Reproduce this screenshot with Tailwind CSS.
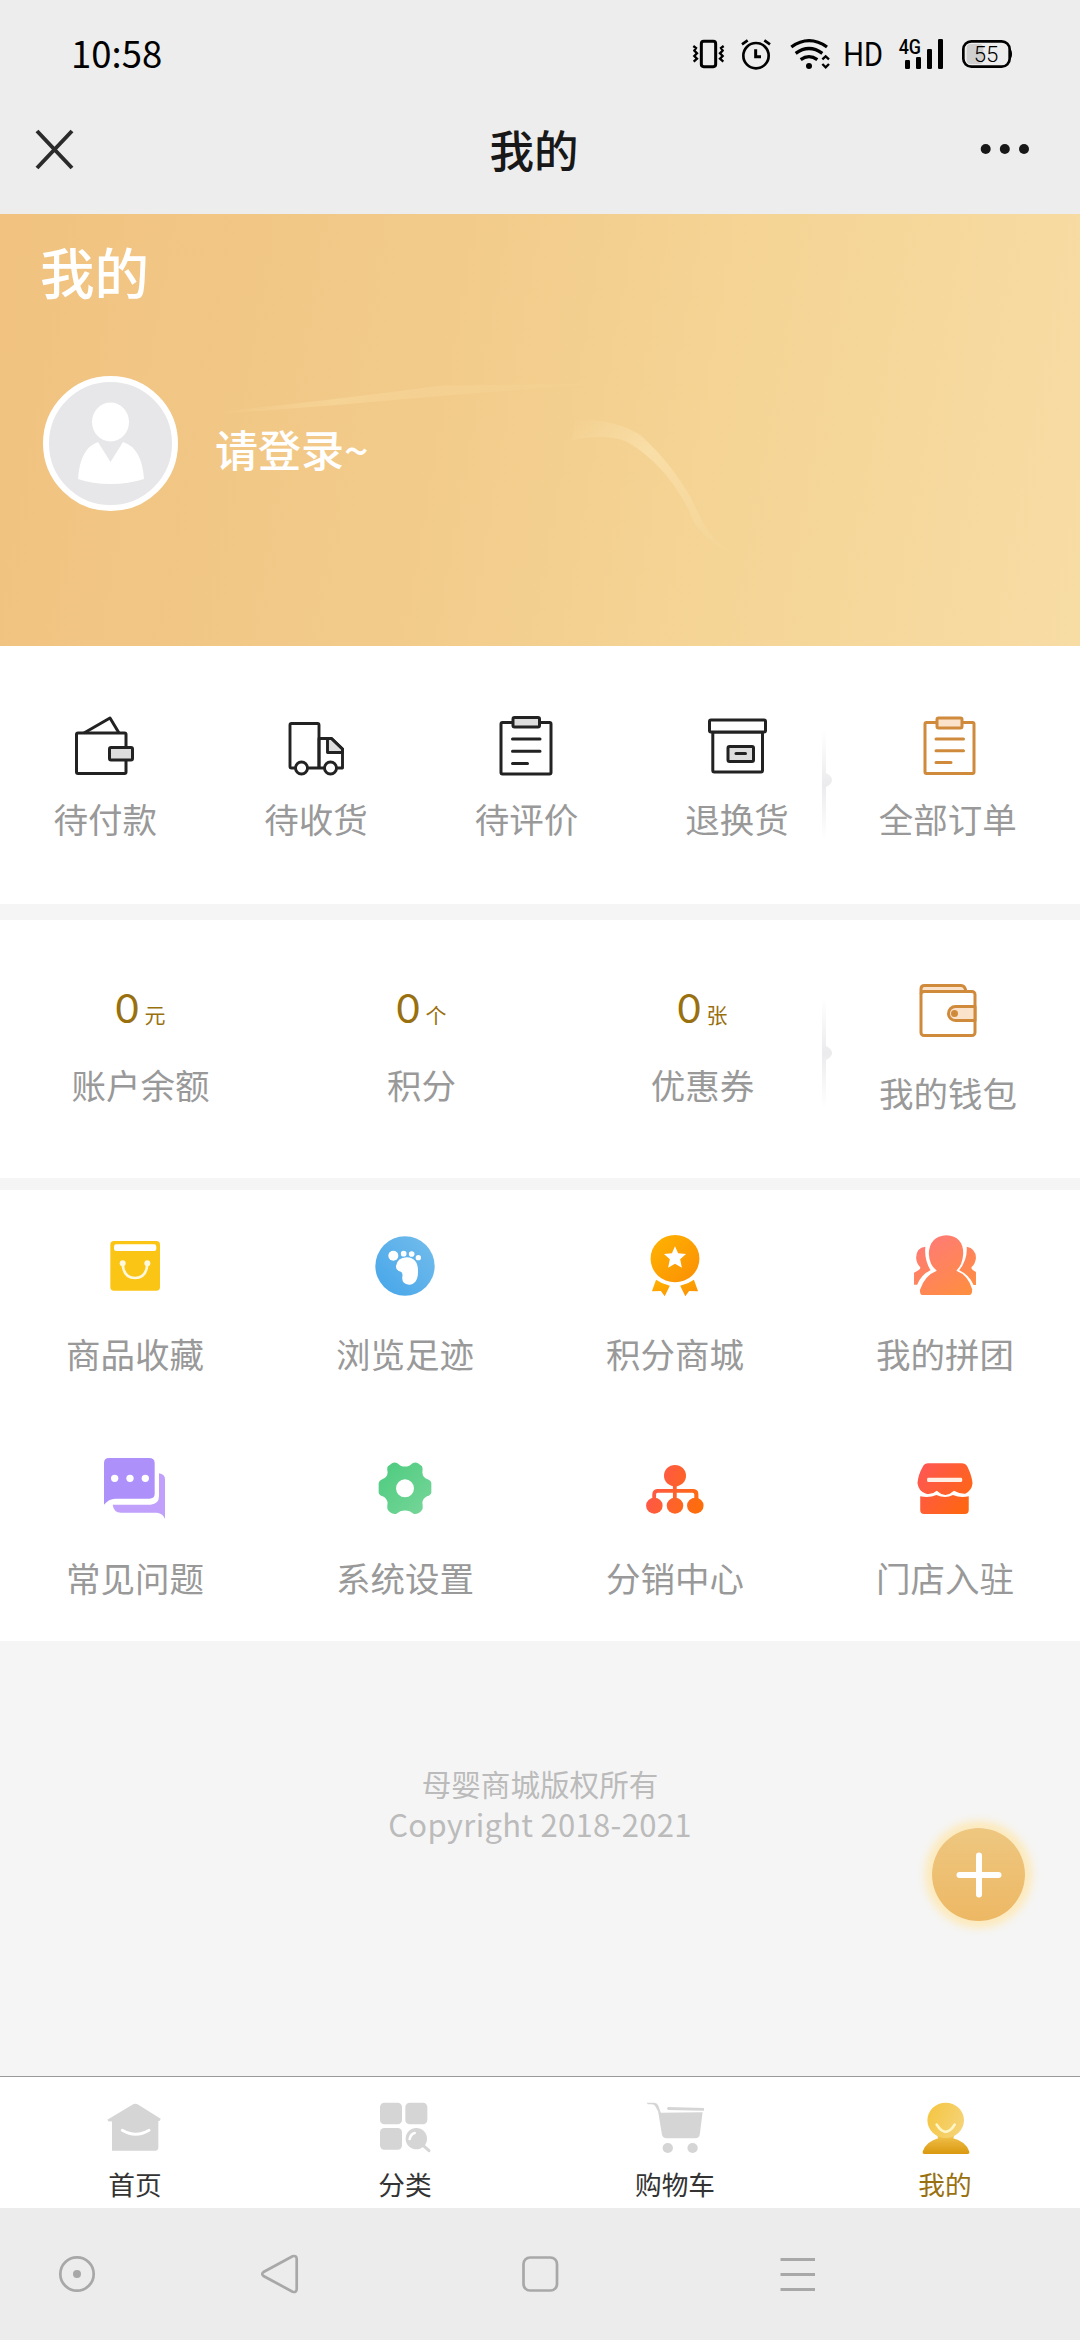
<!DOCTYPE html>
<html lang="zh-CN">
<head>
<meta charset="utf-8">
<title>我的</title>
<script src="https://cdn.jsdelivr.net/npm/@tailwindcss/browser@4"></script>
</head>
<body class="bg-[#f5f5f5]">
<div class="flex h-[2340px] w-[1080px] flex-col overflow-hidden bg-[#f5f5f5] font-['Noto_Sans_CJK_SC',sans-serif] text-[34.5px] leading-[40px] text-[#999]">

  <!-- Status bar -->
  <div class="flex h-[108px] shrink-0 items-center justify-between bg-[#ededed] pr-[65px] pl-[71px] text-black">
    <span class="mb-[3px] text-[36.5px]">10:58</span>
    <div class="flex items-center">
      <svg class="h-10 w-[43px]" viewBox="90 102 129 120" fill="none" stroke="#000" stroke-width="7"><rect x="121" y="124" width="43" height="76" rx="7" stroke-width="9"/><path d="M97 138l8 6-5 8 8 8-8 8 8 8-10 9M188 138l-8 6 5 8-8 8 8 8-8 8 10 9"/></svg>
      <svg class="h-10 w-[47px]" viewBox="219 102 141 120" fill="none" stroke="#000"><circle cx="285" cy="167" r="38" stroke-width="8"/><path d="M284 148v22h16" stroke-width="9"/><path d="M243 133l17-12M327 133l-17-12" stroke-width="8"/></svg>
      <svg class="h-10 w-[57px]" viewBox="360 102 171 120" fill="none" stroke="#000"><path d="M391 141q53-38 107 0M404 160q40-29 80 0M419 179q25-18 50 0" stroke-width="10"/><circle cx="444" cy="198" r="9" fill="#000" stroke="none"/><path d="M484 178l10-9 10 9M484 192l10 10 10-10" stroke-width="7"/></svg>
      <svg class="h-10 w-[53px]" viewBox="531 102 159 120"><text x="547" y="197" textLength="119" lengthAdjust="spacingAndGlyphs" font-family="Roboto, sans-serif" font-size="98">HD</text></svg>
      <svg class="h-10 w-[63px]" viewBox="690 102 189 120"><text x="713" y="161" textLength="67" lengthAdjust="spacingAndGlyphs" font-family="Roboto, sans-serif" font-size="60" font-weight="500">4G</text><rect x="732" y="180" width="15" height="27" rx="4"/><rect x="765" y="171" width="15" height="36" rx="4"/><rect x="798" y="147" width="15" height="60" rx="4"/><rect x="831" y="117" width="15" height="90" rx="4"/></svg>
      <svg class="h-10 w-[61px]" viewBox="879 102 183 120"><rect x="917" y="132" width="50" height="60" rx="12" fill="#cfcfcf"/><rect x="907" y="124" width="139" height="76" rx="24" fill="none" stroke="#000" stroke-width="8"/><path d="M1046 146q7 3 7 16t-7 16z"/><text x="938" y="185" textLength="74" lengthAdjust="spacingAndGlyphs" font-family="Roboto, sans-serif" font-size="66" font-weight="300">55</text></svg>
    </div>
  </div>

  <!-- Title bar -->
  <div class="flex h-[106px] shrink-0 items-center justify-between bg-[#ededed] pr-[50px] pb-6 pl-[34px]">
    <svg class="h-[42px] w-[42px]" viewBox="0 0 42 42" stroke="#2b2b2b" stroke-width="4"><path d="M3 3l35 37M38 3L3 40"/></svg>
    <h1 class="pl-[12px] text-[44.5px] font-medium text-[#181818]">我的</h1>
    <svg class="h-3 w-[50px]" viewBox="0 0 50 12" fill="#181818"><circle cx="5.700" cy="6" r="5"/><circle cx="24.800" cy="6" r="5"/><circle cx="44" cy="6" r="5"/></svg>
  </div>

  <!-- Profile banner -->
  <div class="relative h-[432px] shrink-0 bg-linear-[100deg,#f1c280_0%,#f2cb8a_40%,#f5d596_68%,#f7dca4_100%] px-[40px] pt-[27px] text-white">
    <svg class="absolute inset-0 h-full w-full" viewBox="0 12 1568 1296" preserveAspectRatio="none">
      <defs>
        <linearGradient id="ray" x1="0" x2="1"><stop offset="0" stop-color="#f9dda3" stop-opacity="0"/><stop offset=".3" stop-color="#f9dda3" stop-opacity=".5"/><stop offset="1" stop-color="#f9dda3" stop-opacity="0"/></linearGradient>
        <linearGradient id="tail" x1="0" y1="0" x2="1" y2="1"><stop offset="0" stop-color="#fae2ae" stop-opacity="0"/><stop offset=".35" stop-color="#fae2ae" stop-opacity=".75"/><stop offset="1" stop-color="#fae2ae" stop-opacity="0"/></linearGradient>
      </defs>
      <path d="M310 608Q500 565 640 527L880 520Q680 550 560 572T310 612z" fill="url(#ray)"/>
      <path d="M835 630Q890 625 930 675 985 780 1012 900 1030 990 1070 1040 1010 980 1000 900 965 760 910 695 880 670 830 690z" fill="url(#tail)"/>
    </svg>
    <h2 class="relative text-[54.5px] leading-[60px] font-medium">我的</h2>
    <div class="relative mt-[75px] ml-[3px] flex items-center gap-[37px]">
      <svg class="h-[135px] w-[135px]" viewBox="0 0 135 135"><circle cx="67.500" cy="67.500" r="64.500" fill="#e7e6e8" stroke="#fff" stroke-width="6"/><ellipse cx="67.500" cy="46" rx="18.500" ry="19.500" fill="#fff"/><path d="M55 66L67.500 86 80 66Q99 72 101 103 86 108 67.500 108T35 103Q37 72 55 66z" fill="#fff"/></svg>
      <span class="pt-[8px] text-[43px] font-medium">请登录~</span>
    </div>
  </div>

  <!-- Orders -->
  <section class="relative h-[258px] shrink-0 bg-white pt-[70px]">
    <div class="grid w-[1053px] grid-cols-5">
      <div class="flex flex-col items-center gap-[22px]">
        <svg class="h-[60px] w-[60px]" viewBox="75 716 60 60" fill="none" stroke="#222" stroke-width="3" stroke-linejoin="round"><path d="M84 733l26-15 9 15"/><rect x="76.500" y="733" width="49.500" height="40.500" rx="1.500"/><rect x="109.500" y="747.500" width="23" height="12.500" rx="1.500" fill="#ddd"/></svg>
        <span>待付款</span>
      </div>
      <div class="flex flex-col items-center gap-[22px]">
        <svg class="h-[60px] w-[60px]" viewBox="286 716 60 60" fill="none" stroke="#222" stroke-width="2.900" stroke-linejoin="round"><path d="M327.500 738.500h4l11 10.500v3.500h-15z" fill="#ddd"/><rect x="290" y="723.500" width="29" height="44.500" rx="1.500"/><path d="M319 738.500h12.500l11 10.500v19H319z"/><circle cx="301.500" cy="768" r="6" fill="#fff"/><circle cx="330.500" cy="768" r="6" fill="#fff"/></svg>
        <span>待收货</span>
      </div>
      <div class="flex flex-col items-center gap-[22px]">
        <svg class="h-[60px] w-[60px]" viewBox="496.500 716 60 60" fill="none" stroke="#222" stroke-width="3" stroke-linejoin="round" stroke-linecap="round"><rect x="501.500" y="722.500" width="50" height="51.500" rx="1.500"/><rect x="513.500" y="717.500" width="26.500" height="9.500" rx="1.500" fill="#ddd"/><path d="M513 739h27.500M513 751.300h27.500M513 763.500h15"/></svg>
        <span>待评价</span>
      </div>
      <div class="flex flex-col items-center gap-[22px]">
        <svg class="h-[60px] w-[60px]" viewBox="707 716 60 60" fill="none" stroke="#222" stroke-width="3" stroke-linejoin="round" stroke-linecap="round"><rect x="712.800" y="732" width="49.700" height="40" rx="1.500"/><rect x="709.500" y="720" width="56" height="12" rx="1.500" fill="#fff"/><rect x="728" y="746.500" width="25.500" height="15" rx="1.500" fill="#ddd"/><path d="M736 753.500h9.500"/></svg>
        <span>退换货</span>
      </div>
      <div class="flex flex-col items-center gap-[22px]">
        <svg class="h-[60px] w-[60px]" viewBox="917 716 60 60" fill="none" stroke="#d08a3c" stroke-width="3" stroke-linejoin="round" stroke-linecap="round"><rect x="924" y="722.500" width="49" height="51" rx="1.500"/><rect x="936" y="718" width="25" height="10" rx="1.500" fill="#fbe2ca"/><path d="M935 739h27.500M935 750.700h27.500M935 762.500h15"/></svg>
        <span>全部订单</span>
      </div>
    </div>
    <svg class="absolute top-[84px] left-[818px] h-[110px] w-4" viewBox="0 0 16 110"><defs><linearGradient id="fade" x1="0" y1="0" x2="0" y2="1"><stop offset="0" stop-color="#ededef" stop-opacity="0"/><stop offset=".5" stop-color="#ebebed"/><stop offset="1" stop-color="#ededef" stop-opacity="0"/></linearGradient></defs><path d="M4 0h4v43q6 3 6 7t-6 7v53H4z" fill="url(#fade)"/></svg>
  </section>

  <!-- Wallet -->
  <section class="relative mt-4 flex h-[258px] shrink-0 bg-white">
    <div class="grid w-[843px] grid-cols-3 content-start pt-[68px]">
      <div class="flex flex-col items-center gap-[36px]">
        <p class="flex h-10 items-baseline gap-[6px] text-[#99700f]"><span class="font-[Lato] text-[40px]">0</span><span class="text-[21px]">元</span></p>
        <span>账户余额</span>
      </div>
      <div class="flex flex-col items-center gap-[36px]">
        <p class="flex h-10 items-baseline gap-[6px] text-[#99700f]"><span class="font-[Lato] text-[40px]">0</span><span class="text-[21px]">个</span></p>
        <span>积分</span>
      </div>
      <div class="flex flex-col items-center gap-[36px]">
        <p class="flex h-10 items-baseline gap-[6px] text-[#99700f]"><span class="font-[Lato] text-[40px]">0</span><span class="text-[21px]">张</span></p>
        <span>优惠券</span>
      </div>
    </div>
    <div class="flex w-[210px] flex-col items-center gap-8 pt-[60px]">
      <svg class="h-[60px] w-[60px]" viewBox="918 980 60 60" fill="none" stroke="#d08a3c" stroke-width="3" stroke-linejoin="round"><path d="M921 994v-5q0-3.500 3.500-3.500H961q4 0 5 6H923" fill="#fbe2ca"/><rect x="921" y="991.500" width="54" height="44" rx="3" fill="#fff"/><path d="M975 1006.500h-19.500a7 7 0 0 0 0 14H975z" fill="#fbe2ca"/><circle cx="954.500" cy="1013.500" r="2" fill="#b97b3a"/></svg>
      <span>我的钱包</span>
    </div>
    <svg class="absolute top-[78px] left-[818px] h-[110px] w-4" viewBox="0 0 16 110"><path d="M4 0h4v48q6 3 6 7t-6 7v48H4z" fill="url(#fade)"/></svg>
  </section>

  <!-- Services -->
  <section class="mt-3 grid h-[451px] shrink-0 grid-cols-4 content-start gap-y-[85px] bg-white pt-11">
    <div class="flex flex-col items-center gap-[35px]">
      <svg class="h-16 w-16" viewBox="219 72 192 192"><rect x="241" y="93" width="149" height="149" rx="11" fill="#fac515"/><rect x="252" y="103" width="127" height="20" rx="7" fill="#fff"/><path d="M278 162q3 42 37 42t37-42" fill="none" stroke="#fff8dc" stroke-width="8"/><circle cx="278" cy="160" r="9" fill="#fff8dc"/><circle cx="352" cy="160" r="9" fill="#fff8dc"/></svg>
      <span>商品收藏</span>
    </div>
    <div class="flex flex-col items-center gap-[35px]">
      <svg class="h-16 w-16" viewBox="1029 72 192 192"><defs><linearGradient id="blue" x1="1" y1="0" x2="0" y2="1"><stop offset="0" stop-color="#74bdec"/><stop offset="1" stop-color="#45a5e9"/></linearGradient></defs><circle cx="1125" cy="168" r="89" fill="url(#blue)"/><g fill="#fff"><circle cx="1090" cy="137" r="15"/><circle cx="1121" cy="131" r="8.500"/><circle cx="1145" cy="132" r="8.500"/><circle cx="1165" cy="143" r="8"/><path d="M1098 168q4-25 32-26 35 2 34 43 0 37-27 39-23-2-20-24 3-15-11-17-9-4-8-15z"/></g></svg>
      <span>浏览足迹</span>
    </div>
    <div class="flex flex-col items-center gap-[35px]">
      <svg class="h-16 w-16" viewBox="299 72 186 192" preserveAspectRatio="none"><defs><linearGradient id="gold" x1="0" y1="0" x2="1" y2="1"><stop offset="0" stop-color="#ffb400"/><stop offset="1" stop-color="#fb8e05"/></linearGradient></defs><g fill="url(#gold)"><circle cx="392" cy="146" r="71"/><path d="M337 209q17 13 40 18l-15 32-11-16-26 1zM447 209q-17 13-40 18l15 32 11-16 26 1z"/></g><path d="M392 109l9 21 23 2-17 16 5 25-20-12-20 12 5-25-17-16 23-2z" fill="#fff"/></svg>
      <span>积分商城</span>
    </div>
    <div class="flex flex-col items-center gap-[35px]">
      <svg class="h-16 w-16" viewBox="1083 72 186 192" preserveAspectRatio="none"><defs><linearGradient id="coral" gradientUnits="userSpaceOnUse" x1="1110" y1="80" x2="1225" y2="255"><stop offset="0" stop-color="#ff7a78"/><stop offset="1" stop-color="#ff8d42"/></linearGradient></defs><g fill="url(#coral)"><path d="M1119 110q-27 3-27 33 1 17 12 29 2 6-18 16v36h9q13-31 39-43-19-32-15-71zM1239 110q26 5 27 33-1 17-13 29-2 6 13 14v39h-7q-12-30-42-44 25-32 22-71z"/><path d="M1180 76q49 3 49 55-2 33-20 51 34 13 46 56 0 17-7 17h-138q-7 0-7-15 14-44 49-58-22-18-23-51 2-52 51-55z"/></g></svg>
      <span>我的拼团</span>
    </div>
    <div class="flex flex-col items-center gap-[35px]">
      <svg class="h-16 w-16" viewBox="219 744 192 192"><path d="M222 759q0-15 15-15h120q17 0 17 15v93q0 14-16 14H256q-20 0-34 18z" fill="#ae90fb"/><path d="M387 790q18 3 18 18v119q-5-16-24-19H273q-22 0-25-24h114q25-2 25-26z" fill="#c0a0fb"/><g fill="#fff"><circle cx="254" cy="805" r="11"/><circle cx="300" cy="805" r="11"/><circle cx="346" cy="805" r="11"/></g></svg>
      <span>常见问题</span>
    </div>
    <div class="flex flex-col items-center gap-[35px]">
      <svg class="h-16 w-16" viewBox="1029 744 192 192"><defs><linearGradient id="green" x1="0" y1="0" x2="1" y2="1"><stop offset="0" stop-color="#4ccb7e"/><stop offset="1" stop-color="#78d69a"/></linearGradient></defs><path fill-rule="evenodd" d="M1086 760q7-4 15-1l11 8q13 5 26 0l11-8q8-3 15 1l12 9q3 6 1 18 1 15 14 20 12 5 13 12v29q-1 7-13 11-12 6-14 19 3 17-1 22-9 13-24 12l-13-8q-14-5-28 0l-13 8q-15 1-24-12-4-5-1-22-3-14-15-19-11-4-12-11v-29q1-7 12-12 14-5 15-20-3-13 1-18zM1125 808a27 27 0 1 0 0 54 27 27 0 1 0 0-54z" fill="url(#green)"/></svg>
      <span>系统设置</span>
    </div>
    <div class="flex flex-col items-center gap-[35px]">
      <svg class="h-16 w-16" viewBox="299 744 186 192" preserveAspectRatio="none"><defs><linearGradient id="red" gradientUnits="userSpaceOnUse" x1="320" y1="810" x2="470" y2="870"><stop offset="0" stop-color="#ff564c"/><stop offset="1" stop-color="#fd6d0c"/></linearGradient></defs><g fill="url(#red)"><circle cx="392" cy="797" r="32"/><circle cx="332" cy="887" r="24"/><circle cx="392" cy="887" r="24"/><circle cx="451" cy="887" r="24"/><path d="M386 825h11v12h49q14 2 14 15v18h-12v-17q0-5-5-5h-46v22h-11v-22h-44q-5 0-5 5v17h-11v-18q1-14 14-15h46z"/></g></svg>
      <span>分销中心</span>
    </div>
    <div class="flex flex-col items-center gap-[35px]">
      <svg class="h-16 w-16" viewBox="1083 744 186 192" preserveAspectRatio="none"><defs><linearGradient id="shop" gradientUnits="userSpaceOnUse" x1="1110" y1="780" x2="1240" y2="880"><stop offset="0" stop-color="#ff5750"/><stop offset="1" stop-color="#ff6613"/></linearGradient></defs><g fill="url(#shop)"><path d="M1127 760h97q13 0 18 12 12 26 14 48-2 22-21 31-16 1-33-9-11 11-25 13-14-2-25-13-14 13-31 9-21-5-25-31 2-26 15-49 5-11 16-11z"/><path d="M1104 859q26 6 47-4 26 12 48 0 22 10 46 4v42q0 11-11 11h-119q-11 0-11-11z"/></g><rect x="1124" y="803" width="102" height="13" rx="4" fill="#fff0e6"/></svg>
      <span>门店入驻</span>
    </div>
  </section>

  <!-- Copyright -->
  <footer class="relative h-[435px] shrink-0 pt-[123px] text-center text-[29.6px] text-[#bbb]">
    <p>母婴商城版权所有</p>
    <p class="text-[31px] tracking-[0.3px]">Copyright 2018-2021</p>
    <button class="absolute top-[187px] left-[932px] flex h-[93px] w-[93px] items-center justify-center rounded-full bg-linear-to-b from-[#eec780] to-[#edb864] shadow-[0_0_9px_7px_#fdeabb]">
      <svg class="h-[46px] w-[46px]" viewBox="0 0 46 46" stroke="#fff" stroke-width="6" stroke-linecap="round"><path d="M23 3.500v39M3.500 23h39"/></svg>
    </button>
  </footer>

  <!-- Tab bar -->
  <nav class="grid h-[132px] shrink-0 grid-cols-4 border-t border-[#999] bg-white pt-5 text-[26.700px] leading-[30px] text-[#333]">
    <div class="flex flex-col items-center gap-3">
      <svg class="h-[60px] w-[60px]" viewBox="135 111 180 180"><path d="M217 134q9-6 18 0l67 42q-1 8-7 7v82q-1 7-8 7H156v-88q-11 3-14-5z" fill="#d5d5d5"/><path d="M187 211q40 24 80 0" fill="none" stroke="#fff" stroke-width="9" stroke-linecap="round"/></svg>
      <span>首页</span>
    </div>
    <div class="flex flex-col items-center gap-3">
      <svg class="h-[60px] w-[60px]" viewBox="945 111 180 180" fill="#d5d5d5"><rect x="960" y="128" width="66" height="65" rx="13"/><rect x="1036" y="128" width="66" height="65" rx="13"/><rect x="960" y="204" width="66" height="65" rx="13"/><circle cx="1069" cy="236" r="32"/><path d="M1089 256l18 16" stroke="#d5d5d5" stroke-width="9" stroke-linecap="round"/><path d="M1049 237q3-15 15-18" fill="none" stroke="#fff" stroke-width="8" stroke-linecap="round"/></svg>
      <span>分类</span>
    </div>
    <div class="flex flex-col items-center gap-3">
      <svg class="h-[60px] w-[60px]" viewBox="305 111 174 180" preserveAspectRatio="none" fill="#d5d5d5"><path d="M310 128h22q8 0 11 8l8 22 121-1-8 66q-2 12-13 12h-83q-12 0-14-12l-11-69-9-17q-3-4-12-4h-9z"/><path d="M372 141l104 3v8l-104-2q-6-5 0-9z"/><circle cx="371" cy="264" r="15"/><circle cx="443" cy="264" r="15"/></svg>
      <span>购物车</span>
    </div>
    <div class="flex flex-col items-center gap-3 text-[#99700f]">
      <svg class="h-[60px] w-[60px]" viewBox="1089 111 174 180" preserveAspectRatio="none"><defs><linearGradient id="head" x1="0" y1="0" x2="1" y2=".4"><stop offset="0" stop-color="#f5c53f"/><stop offset="1" stop-color="#f5d273"/></linearGradient><linearGradient id="torso" x1="0" y1="0" x2="0" y2="1"><stop offset="0" stop-color="#f4cb58"/><stop offset=".4" stop-color="#e9b236"/><stop offset="1" stop-color="#da990f"/></linearGradient></defs><path d="M1152 222h52l-4 13q38 10 47 41 0 6-5 6h-126q-6 0-5-7 10-30 45-40z" fill="url(#torso)"/><circle cx="1178" cy="181" r="53" fill="url(#head)"/><path d="M1152 194q26 43 52 0" fill="none" stroke="#fff6c8" stroke-width="8" stroke-linecap="round"/></svg>
      <span>我的</span>
    </div>
  </nav>

  <!-- System navigation -->
  <div class="flex h-[132px] shrink-0 items-center bg-[#ececec] pl-[57px]">
    <svg class="h-10 w-10" viewBox="0 0 40 40" fill="none" stroke="#a8a8a8" stroke-width="2.700"><circle cx="20" cy="20" r="16.700"/><circle cx="20" cy="20" r="4" fill="#a8a8a8" stroke="none"/></svg>
    <svg class="ml-[163px] h-10 w-10" viewBox="0 0 40 40" fill="none" stroke="#a8a8a8" stroke-width="2.700"><path d="M3.500 18L32.500 2.300Q36.700 1 36.700 5v30Q36.700 39 32.500 37.700L3.500 22Q1 20 3.500 18z"/></svg>
    <svg class="ml-[220px] h-10 w-10" viewBox="0 0 40 40" fill="none" stroke="#a8a8a8" stroke-width="2.700"><rect x="3.500" y="3.500" width="33.500" height="33" rx="6.500"/></svg>
    <svg class="ml-[218px] h-10 w-10" viewBox="0 0 40 40" stroke="#a8a8a8" stroke-width="3"><path d="M2.500 5.500h34.500M2.500 20.500h34.500M2.500 35.500h34.500"/></svg>
  </div>
</div>
</body>
</html>
